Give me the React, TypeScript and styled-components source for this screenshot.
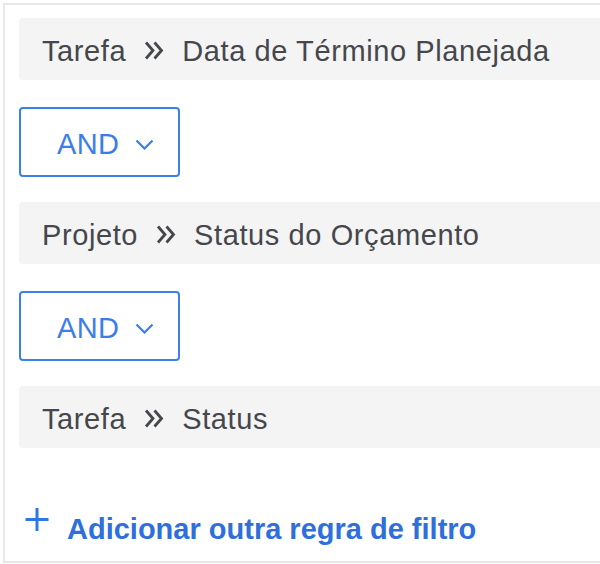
import React from "react";
import styled, { createGlobalStyle } from "styled-components";

const Global = createGlobalStyle`
  html, body { margin: 0; padding: 0; background: #ffffff; }
  body { width: 600px; height: 564px; overflow: hidden; font-family: "Liberation Sans", Arial, sans-serif; }
`;

const Frame = styled.div`
  margin: 3px 0 0 3px;
  width: 597px;
  height: 560px;
  border: 2px solid #e8e8e8;
  border-right: none;
  padding: 13px 0 0 14px;
  box-sizing: border-box;
  display: flex;
  flex-direction: column;
  overflow: hidden;
`;

const RuleRow = styled.div`
  height: 62px;
  box-sizing: border-box;
  padding: 3px 0 0 23px;
  background: #f4f4f4;
  border-radius: 4px 0 0 4px;
  display: flex;
  align-items: center;
  gap: 18px;
  font-size: 29px;
  line-height: 34px;
  letter-spacing: 0.6px;
  color: #45474c;
  white-space: nowrap;
`;

const Connector = styled.button`
  margin: 27px 0 25px;
  width: 161px;
  height: 70px;
  box-sizing: border-box;
  border: 2px solid #3a82ea;
  border-radius: 4px;
  background: #ffffff;
  padding: 4px 0 0 36px;
  display: flex;
  align-items: center;
  gap: 16px;
  font-family: "Liberation Sans", Arial, sans-serif;
  font-size: 29px;
  line-height: 34px;
  letter-spacing: 0.4px;
  color: #3b7deb;
  cursor: pointer;
`;

const AddLink = styled.a`
  margin-top: 59px;
  display: flex;
  align-items: flex-start;
  gap: 18px;
  padding-left: 6px;
  color: #2e6fdc;
  font-size: 29px;
  line-height: 34px;
  font-weight: 700;
  text-decoration: none;
  white-space: nowrap;
  cursor: pointer;
`;

const LinkText = styled.span`
  padding-top: 5px;
`;

const Chevrons = () => (
  <svg width="20" height="19" viewBox="0 0 20 19" fill="none" stroke="#45474c" strokeWidth="2.8" strokeLinejoin="miter">
    <polyline points="2,1.5 9,9.5 2,17.5" />
    <polyline points="10.5,1.5 17.5,9.5 10.5,17.5" />
  </svg>
);

const ChevronDown = () => (
  <svg width="19" height="11" viewBox="0 0 19 11" fill="none" stroke="#3b7deb" strokeWidth="2.2">
    <polyline points="1.5,1.5 9.5,9.5 17.5,1.5" />
  </svg>
);

const Plus = () => (
  <svg width="24" height="25" viewBox="0 0 24 25" fill="none" stroke="#2e78e4" strokeWidth="3">
    <line x1="12" y1="1" x2="12" y2="24" />
    <line x1="0.5" y1="12.5" x2="23.5" y2="12.5" />
  </svg>
);

const Rule = ({ a, b }: { a: string; b: string }) => (
  <RuleRow>
    <span>{a}</span>
    <Chevrons />
    <span>{b}</span>
  </RuleRow>
);

const And = () => (
  <Connector>
    <span>AND</span>
    <ChevronDown />
  </Connector>
);

export default function App() {
  return (
    <>
      <Global />
      <Frame>
        <Rule a="Tarefa" b="Data de Término Planejada" />
        <And />
        <Rule a="Projeto" b="Status do Orçamento" />
        <And />
        <Rule a="Tarefa" b="Status" />
        <AddLink>
          <Plus />
          <LinkText>Adicionar outra regra de filtro</LinkText>
        </AddLink>
      </Frame>
    </>
  );
}
